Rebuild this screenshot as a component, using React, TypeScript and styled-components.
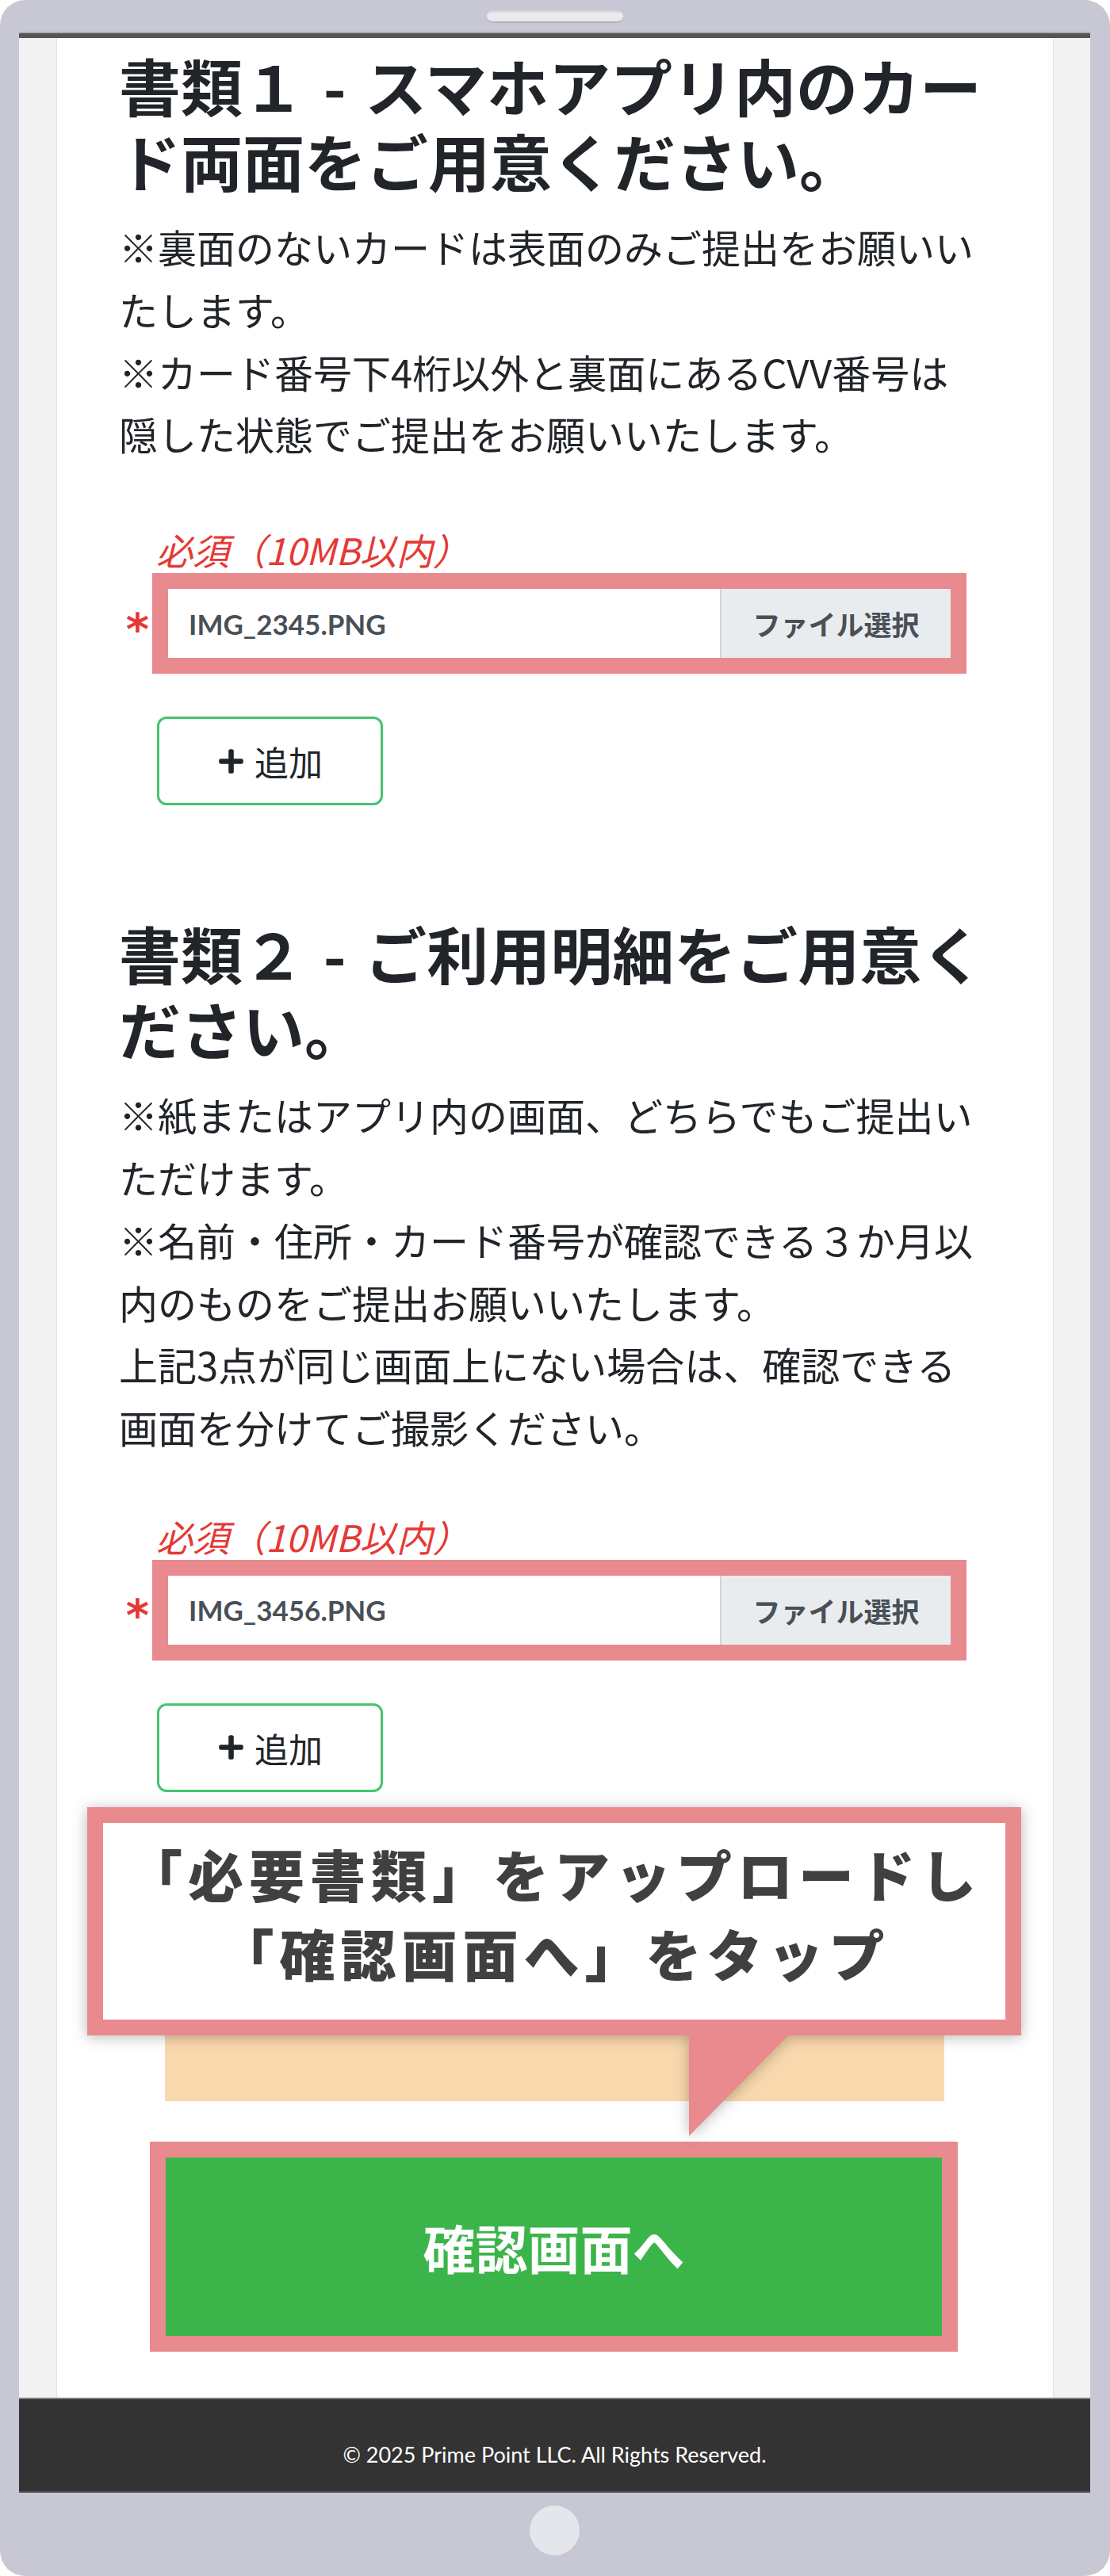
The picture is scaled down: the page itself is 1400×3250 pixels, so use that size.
import React from "react";
import styled, { createGlobalStyle } from "styled-components";
import { FaPlus } from "react-icons/fa";

const PINK = "#e98a8e";
const TEXT = "#212529";
const JP = `"Noto Sans CJK JP", "Noto Sans", sans-serif`;
const LATIN = `"Lato", "Noto Sans CJK JP", sans-serif`;

const GlobalStyle = createGlobalStyle`
  * {
    box-sizing: border-box;
  }
  html,
  body {
    margin: 0;
    padding: 0;
    background: #ffffff;
  }
  body {
    font-family: ${JP};
    color: ${TEXT};
  }
`;

const Device = styled.div`
  width: 1400px;
  height: 3250px;
  display: flex;
  flex-direction: column;
  padding: 0 25px 0 24px;
  background: #c8c8d4;
  border-radius: 32px;
  overflow: hidden;
`;

const TopBezel = styled.div`
  height: 40px;
  display: flex;
  justify-content: center;
  padding-top: 13px;
`;

const Speaker = styled.div`
  width: 172px;
  height: 16px;
  border-radius: 8px;
  background: linear-gradient(#cfcfd8, #ececf1 35%, #e6e6ec);
  border-bottom: 2px solid #b3b3bd;
`;

const Screen = styled.div`
  display: flex;
  flex-direction: column;
  background: #f2f2f2;
  border-top: 2px solid #acacb0;
`;

const StatusLine = styled.div`
  height: 6px;
  background: #555555;
`;

const Column = styled.main`
  width: 1258px;
  margin-left: 47px;
  padding: 12px 0 58px;
  background: #ffffff;
  border-left: 1px solid #e4e4e4;
  border-right: 1px solid #e4e4e4;
`;

const Section = styled.section<{ $top?: number }>`
  padding: 0 0 0 78px;
  margin-top: ${(p) => p.$top ?? 0}px;
`;

const Heading = styled.h2`
  width: 1100px;
  margin: 0;
  font-family: ${JP};
  font-size: 78px;
  font-weight: 700;
  line-height: 95px;
  word-spacing: 6px;
  color: ${TEXT};
`;

const Note = styled.p`
  width: 1084px;
  margin: 22px 0 0;
  font-size: 49px;
  line-height: 78.8px;
  color: ${TEXT};
`;

const FormGroup = styled.div<{ $gap: number }>`
  margin-top: ${(p) => p.$gap}px;
  padding-left: 42px;
`;

const RequiredLabel = styled.div`
  padding-left: 5px;
  margin-bottom: 4px;
  font-size: 46px;
  line-height: 52px;
  font-style: italic;
  color: #e53935;
`;

const FieldRow = styled.div`
  display: flex;
  align-items: center;
  margin-left: -42px;
`;

const Asterisk = styled.span`
  width: 42px;
  padding: 14px 4px 0 0;
  text-align: right;
  font-family: "DejaVu Sans", sans-serif;
  font-size: 56px;
  font-weight: 700;
  font-style: italic;
  line-height: 1;
  color: #e53935;
`;

const Highlight = styled.div`
  width: 1027px;
  border: 20px solid ${PINK};
  display: flex;
`;

const FileName = styled.div`
  flex: 1;
  height: 87px;
  display: flex;
  align-items: center;
  padding-left: 26px;
  background: #ffffff;
  font-family: ${LATIN};
  font-size: 35px;
  font-weight: 700;
  color: #495057;
`;

const Browse = styled.div`
  width: 291px;
  height: 87px;
  display: flex;
  align-items: center;
  justify-content: center;
  background: #e9ecef;
  border-left: 2px solid #ced4da;
  font-size: 35px;
  font-weight: 700;
  color: #495057;
`;

const AddButton = styled.button`
  width: 285px;
  height: 112px;
  margin: 54px 0 0 6px;
  display: flex;
  align-items: center;
  justify-content: center;
  gap: 12px;
  background: #ffffff;
  border: 3px solid #45c46f;
  border-radius: 12px;
  font-family: ${JP};
  font-size: 43px;
  color: ${TEXT};
  cursor: pointer;
`;

const ActionArea = styled.div`
  position: relative;
  margin-top: 60px;
`;

const NoticeBox = styled.div`
  width: 983px;
  height: 330px;
  margin-left: 136px;
  background: #fad8ae;
`;

const Callout = styled.div`
  position: absolute;
  top: -41px;
  left: 38px;
  width: 1178px;
  filter: drop-shadow(0 2px 9px rgba(0, 0, 0, 0.28));
`;

const CalloutBody = styled.div`
  height: 288px;
  border: 20px solid ${PINK};
  background: #ffffff;
  display: flex;
  align-items: center;
  justify-content: center;
  padding-bottom: 20px;
  text-align: center;
  font-size: 70px;
  font-weight: 900;
  letter-spacing: 7px;
  line-height: 100px;
  color: #404040;
`;

const CalloutTail = styled.div`
  position: absolute;
  top: 287px;
  left: 759px;
  width: 126px;
  height: 128px;
  background: ${PINK};
  clip-path: polygon(0 0, 100% 0, 0 100%);
`;

const SubmitFrame = styled.div`
  width: 1019px;
  margin: 51px 0 0 117px;
  border: 20px solid ${PINK};
`;

const SubmitButton = styled.button`
  width: 100%;
  height: 225px;
  display: flex;
  align-items: center;
  justify-content: center;
  border: none;
  background: #3bb54a;
  font-family: ${JP};
  font-size: 66px;
  font-weight: 700;
  line-height: 1;
  color: #ffffff;
  cursor: pointer;
`;

const Footer = styled.footer`
  height: 120px;
  display: flex;
  align-items: center;
  justify-content: center;
  padding-top: 24px;
  background: #333333;
  border-top: 2px solid #7c7c7c;
  border-bottom: 2px solid #555555;
  font-family: ${LATIN};
  font-size: 27px;
  color: #ffffff;
`;

const BottomBezel = styled.div`
  flex: 1;
  display: flex;
  justify-content: center;
  padding-top: 16px;
`;

const HomeButton = styled.div`
  width: 63px;
  height: 63px;
  border-radius: 50%;
  background: #e5e5ec;
`;

type UploadFieldProps = {
  fileName: string;
  gap: number;
};

const UploadField: React.FC<UploadFieldProps> = ({ fileName, gap }) => (
  <FormGroup $gap={gap}>
    <RequiredLabel>必須（10MB以内）</RequiredLabel>
    <FieldRow>
      <Asterisk>*</Asterisk>
      <Highlight>
        <FileName>{fileName}</FileName>
        <Browse>ファイル選択</Browse>
      </Highlight>
    </FieldRow>
    <AddButton type="button">
      <FaPlus size={35} />
      追加
    </AddButton>
  </FormGroup>
);

const App: React.FC = () => {
  return (
    <>
      <GlobalStyle />
      <Device>
        <TopBezel>
          <Speaker />
        </TopBezel>
        <Screen>
          <StatusLine />
          <Column>
            <Section>
              <Heading>書類１ - スマホアプリ内のカード両面をご用意ください。</Heading>
              <Note>
                ※裏面のないカードは表面のみご提出をお願いいたします。
                <br />
                ※カード番号下4桁以外と裏面にあるCVV番号は隠した状態でご提出をお願いいたします。
              </Note>
              <UploadField fileName="IMG_2345.PNG" gap={80} />
            </Section>

            <Section $top={139}>
              <Heading>書類２ - ご利用明細をご用意ください。</Heading>
              <Note>
                ※紙またはアプリ内の画面、どちらでもご提出いただけます。
                <br />
                ※名前・住所・カード番号が確認できる３か月以内のものをご提出お願いいたします。
                <br />
                上記3点が同じ画面上にない場合は、確認できる画面を分けてご撮影ください。
              </Note>
              <UploadField fileName="IMG_3456.PNG" gap={72} />
            </Section>

            <ActionArea>
              <NoticeBox />
              <SubmitFrame>
                <SubmitButton type="button">確認画面へ</SubmitButton>
              </SubmitFrame>
              <Callout>
                <CalloutBody>
                  「必要書類」をアップロードし
                  <br />
                  「確認画面へ」をタップ
                </CalloutBody>
                <CalloutTail />
              </Callout>
            </ActionArea>
          </Column>
          <Footer>© 2025 Prime Point LLC. All Rights Reserved.</Footer>
        </Screen>
        <BottomBezel>
          <HomeButton />
        </BottomBezel>
      </Device>
    </>
  );
};

export default App;
